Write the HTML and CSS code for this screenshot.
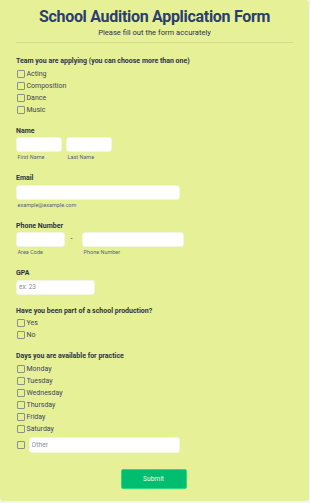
FILE: index.html
```html
<!DOCTYPE html>
<html lang="en">
<head>
    <meta charset="UTF-8">
    <meta name="viewport" content="width=device-width, initial-scale=1.0">
    <title>School Audition Application Form</title>
    <link rel="stylesheet" href="styles.css">
</head>
<body>

<div class="form-card">
    <div class="form-header">
        <h1>School Audition Application Form</h1>
        <p>Please fill out the form accurately</p>
    </div>

    <div class="field">
        <label class="field-label">Team you are applying (you can choose more than one)</label>
        <ul class="choices">
            <li><span class="box"></span>Acting</li>
            <li><span class="box"></span>Composition</li>
            <li><span class="box"></span>Dance</li>
            <li><span class="box"></span>Music</li>
        </ul>
    </div>

    <div class="field">
        <label class="field-label">Name</label>
        <div class="row">
            <div class="sub">
                <input type="text" class="w-name">
                <span class="sublabel">First Name</span>
            </div>
            <div class="sub">
                <input type="text" class="w-name">
                <span class="sublabel">Last Name</span>
            </div>
        </div>
    </div>

    <div class="field">
        <label class="field-label">Email</label>
        <div class="sub">
            <input type="text" class="w-full">
            <span class="sublabel">example@example.com</span>
        </div>
    </div>

    <div class="field">
        <label class="field-label">Phone Number</label>
        <div class="row">
            <div class="sub">
                <input type="text" class="w-area">
                <span class="sublabel">Area Code</span>
            </div>
            <span class="dash">-</span>
            <div class="sub">
                <input type="text" class="w-phone">
                <span class="sublabel">Phone Number</span>
            </div>
        </div>
    </div>

    <div class="field gpa">
        <label class="field-label">GPA</label>
        <input type="text" class="w-gpa" placeholder="ex: 23">
    </div>

    <div class="field">
        <label class="field-label">Have you been part of a school production?</label>
        <ul class="choices">
            <li><span class="box"></span>Yes</li>
            <li><span class="box"></span>No</li>
        </ul>
    </div>

    <div class="field">
        <label class="field-label">Days you are available for practice</label>
        <ul class="choices">
            <li><span class="box"></span>Monday</li>
            <li><span class="box"></span>Tuesday</li>
            <li><span class="box"></span>Wednesday</li>
            <li><span class="box"></span>Thursday</li>
            <li><span class="box"></span>Friday</li>
            <li><span class="box"></span>Saturday</li>
            <li class="other"><span class="box"></span><input type="text" class="w-other" placeholder="Other"></li>
        </ul>
    </div>

    <div class="actions">
        <button>Submit</button>
    </div>
</div>

</body>
</html>
```

FILE: styles.css
```css
body {
    margin: 0;
    padding: 0;
    background-color: #f3f3f3;
    font-family: Roboto, 'Liberation Sans', sans-serif;
    color: #2c3345;
}

.form-card {
    width: 309px;
    height: 501px;
    box-sizing: border-box;
    background-color: #e6f197;
    border-radius: 0 4px 4px 4px;
    padding: 0 16px;
}

.form-header {
    text-align: center;
    padding-top: 7px;
    padding-bottom: 4px;
    border-bottom: 1px solid #d3dc8c;
    margin-bottom: 14px;
}

.form-header h1 {
    margin: 0;
    font-size: 16px;
    letter-spacing: -0.3px;
    line-height: 20px;
    font-weight: 700;
    color: #2c3e6b;
}

.form-header p {
    margin: 1px 0 0;
    font-size: 7.6px;
    line-height: 10px;
    color: #2c3345;
}

.field {
    margin-bottom: 13px;
}

.field.gpa {
    margin-bottom: 12px;
}

.field-label {
    display: block;
    font-size: 7px;
    font-weight: 700;
    line-height: 8px;
    margin-bottom: 2.5px;
}

.choices {
    list-style-type: none;
    margin: 0 0 -2px;
    padding: 0 0 0 1px;
}

.choices li {
    display: flex;
    align-items: center;
    height: 12px;
    font-size: 7px;
    color: #3e4652;
}

.box {
    width: 6px;
    height: 6px;
    border: 1px solid #8a8f8a;
    border-radius: 1px;
    margin-right: 1.5px;
}

.choices li.other {
    height: 16px;
    margin-top: 2px;
}

.choices li.other .box {
    margin-right: 3.5px;
}

.row {
    display: flex;
    align-items: flex-start;
}

.sub {
    display: flex;
    flex-direction: column;
    margin-right: 4.5px;
}

.sublabel {
    font-size: 5.5px;
    line-height: 7px;
    margin-top: 2px;
    padding-left: 1.5px;
    color: #57647e;
}

input {
    display: block;
    box-sizing: border-box;
    height: 15px;
    border: 1px solid #f2f5e0;
    border-radius: 3px;
    background-color: #fff;
    padding: 0 2px;
    font-family: inherit;
    font-size: 6.4px;
    margin: 0;
}

input::placeholder {
    color: #8a8f99;
}

.w-name { width: 45.5px; }
.w-full { width: 163.5px; }
.w-area { width: 49px; }
.w-phone { width: 102px; }
.w-gpa { width: 79px; }
.w-other { width: 151px; height: 16px; font-size: 6.8px; }

.dash {
    font-size: 7px;
    width: 4px;
    padding-top: 3px;
    margin-right: 8.5px;
    text-align: center;
}

.actions {
    text-align: center;
    padding-top: 2px;
    padding-right: 2px;
}

.actions button {
    width: 66px;
    height: 20px;
    border: 1px solid #2ddb84;
    border-radius: 2px;
    background-color: #01bd6f;
    color: #e9fbe0;
    font-family: inherit;
    font-size: 6.6px;
    cursor: pointer;
}
```
